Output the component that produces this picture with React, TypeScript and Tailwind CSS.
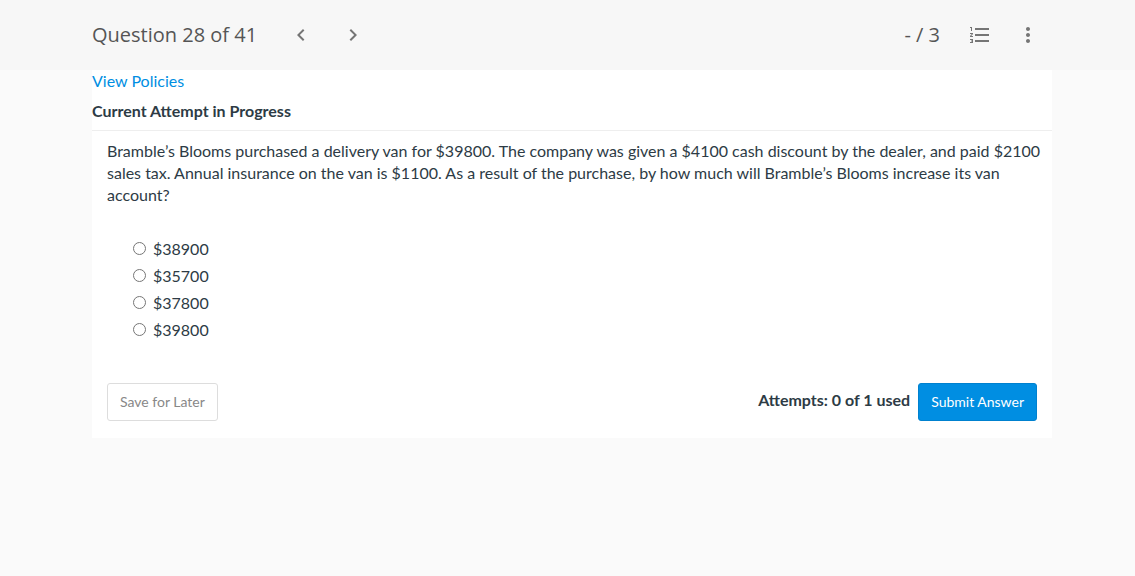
import { useState } from 'react';
import { MdChevronLeft, MdChevronRight, MdFormatListNumbered, MdMoreVert } from 'react-icons/md';

const options = ['$38900', '$35700', '$37800', '$39800'];

export default function App() {
    const [answer, setAnswer] = useState('');

    return (
        <div className="min-h-screen bg-[#fafafa] font-['Lato',sans-serif] text-base leading-[22px] text-[#2d3b45]">
            {/* Top bar */}
            <header className="bg-[#f7f7f7] pl-[9px]">
                <div className="mx-auto flex h-[70px] max-w-[960px] items-center justify-between font-['Open_Sans',sans-serif] text-xl text-[#555] pr-3">
                    <div className="flex items-center">
                        <h1>Question 28 of 41</h1>
                        <nav className="ml-8 flex items-center gap-7 text-[#757575]">
                            <button type="button" aria-label="Previous question">
                                <MdChevronLeft size={24} />
                            </button>
                            <button type="button" aria-label="Next question">
                                <MdChevronRight size={24} />
                            </button>
                        </nav>
                    </div>
                    <div className="flex items-center">
                        <span>- / 3</span>
                        <button type="button" aria-label="Question list" className="ml-7 text-[#757575]">
                            <MdFormatListNumbered size={24} />
                        </button>
                        <button type="button" aria-label="More options" className="ml-6 text-[#757575]">
                            <MdMoreVert size={24} />
                        </button>
                    </div>
                </div>
            </header>

            {/* Question */}
            <main className="pl-[9px]">
                <div className="mx-auto max-w-[960px] bg-white">
                    <div className="border-b border-[#eee] pb-2">
                        <a href="#policies" className="block text-[#008ee2]">View Policies</a>
                        <h2 className="mt-2 font-bold">Current Attempt in Progress</h2>
                    </div>

                    <form className="pb-[17px]" onSubmit={(e) => e.preventDefault()}>
                        <p className="pt-[9px] pl-[15px]">
                            Bramble’s Blooms purchased a delivery van for $39800. The company was given a $4100 cash discount
                            by the dealer, and paid $2100 sales tax. Annual insurance on the van is $1100. As a result of the
                            purchase, by how much will Bramble’s Blooms increase its van account?
                        </p>

                        <div className="mt-[29px] flex flex-col items-start pl-[41px]" role="radiogroup" aria-label="Answer">
                            {options.map((option) => (
                                <label key={option} className="flex h-[27px] items-center gap-[7px]">
                                    <input
                                        type="radio"
                                        name="answer"
                                        value={option}
                                        checked={answer === option}
                                        onChange={() => setAnswer(option)}
                                        className="size-[13px]"
                                    />
                                    {option}
                                </label>
                            ))}
                        </div>

                        <div className="mt-10 flex items-center justify-between px-[15px]">
                            <button type="button" className="h-[38px] rounded-[3px] border border-[#ddd] px-3 text-sm text-[#888]">
                                Save for Later
                            </button>
                            <div className="flex items-center gap-2">
                                <span className="pb-1 font-bold">Attempts: 0 of 1 used</span>
                                <button type="submit" className="h-[38px] rounded-[3px] border border-[#0081cf] bg-[#008ee2] px-3 text-sm text-white">
                                    Submit Answer
                                </button>
                            </div>
                        </div>
                    </form>
                </div>
            </main>
        </div>
    );
}
